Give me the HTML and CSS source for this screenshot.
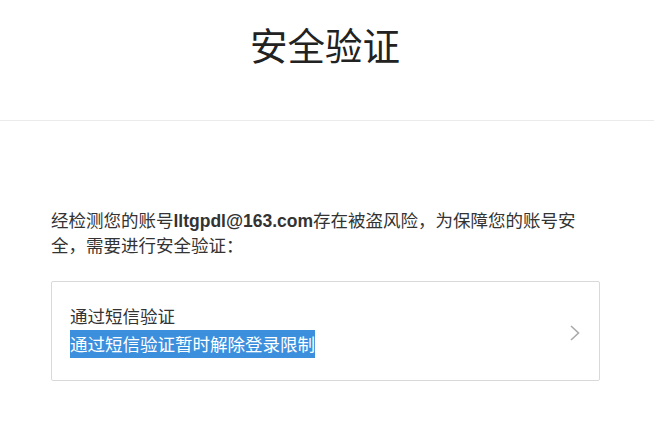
FILE: index.html
```html
<!DOCTYPE html>
<html lang="zh-CN">
<head>
<meta charset="utf-8"/>
<meta content="width=device-width, initial-scale=1.0" name="viewport"/>
<title>安全验证</title>
<link rel="stylesheet" href="styles.css">
</head>
<body>
<header>
<h1>安全验证</h1>
</header>
<main>
<p class="tip">经检测您的账号<b>lltgpdl@163.com</b>存在被盗风险，为保障您的账号安全，需要进行安全验证：</p>
<a class="option" href="#">
  <div class="option-text">
    <div class="option-title">通过短信验证</div>
    <div class="option-desc"><span class="selected">通过短信验证暂时解除登录限制</span></div>
  </div>
  <svg class="arrow" width="12" height="18" viewBox="0 0 12 18"><path d="M2 2 L9.5 9 L2 16" fill="none" stroke="#aaa" stroke-width="1.6"/></svg>
</a>
</main>
</body>
</html>
```
FILE: styles.css
```css
* {
    box-sizing: border-box;
    margin: 0;
    padding: 0;
}
body {
    font-family: "Noto Sans CJK SC", "Liberation Sans", sans-serif;
    background-color: #fff;
    color: #333;
}
header {
    height: 121px;
    border-bottom: 1px solid #ebebeb;
    text-align: center;
}
header h1 {
    font-weight: normal;
    font-size: 37.5px;
    line-height: 44px;
    padding-top: 22px;
    padding-right: 4px;
    color: #222;
}
main {
    padding: 87px 54px 0 51px;
}
.tip {
    height: 48px;
    font-size: 17.5px;
    line-height: 24px;
    padding-right: 12px;
    color: #333;
}
.tip b {
    font-family: "Liberation Sans", sans-serif;
    font-weight: bold;
}
.option {
    display: flex;
    align-items: center;
    justify-content: space-between;
    margin-top: 25px;
    height: 100px;
    padding: 0 18px 0 18px;
    border: 1px solid #d9d9d9;
    border-radius: 2px;
    text-decoration: none;
    color: #333;
}
.option-text {
    font-size: 17.5px;
    line-height: 28px;
    padding-bottom: 2px;
}
.option-title {
    color: #333;
}
.selected {
    background-color: #3b8fdd;
    color: #fff;
    padding: 1px 0 2px;
}
.arrow {
    display: block;
    margin-top: 4px;
}
```
